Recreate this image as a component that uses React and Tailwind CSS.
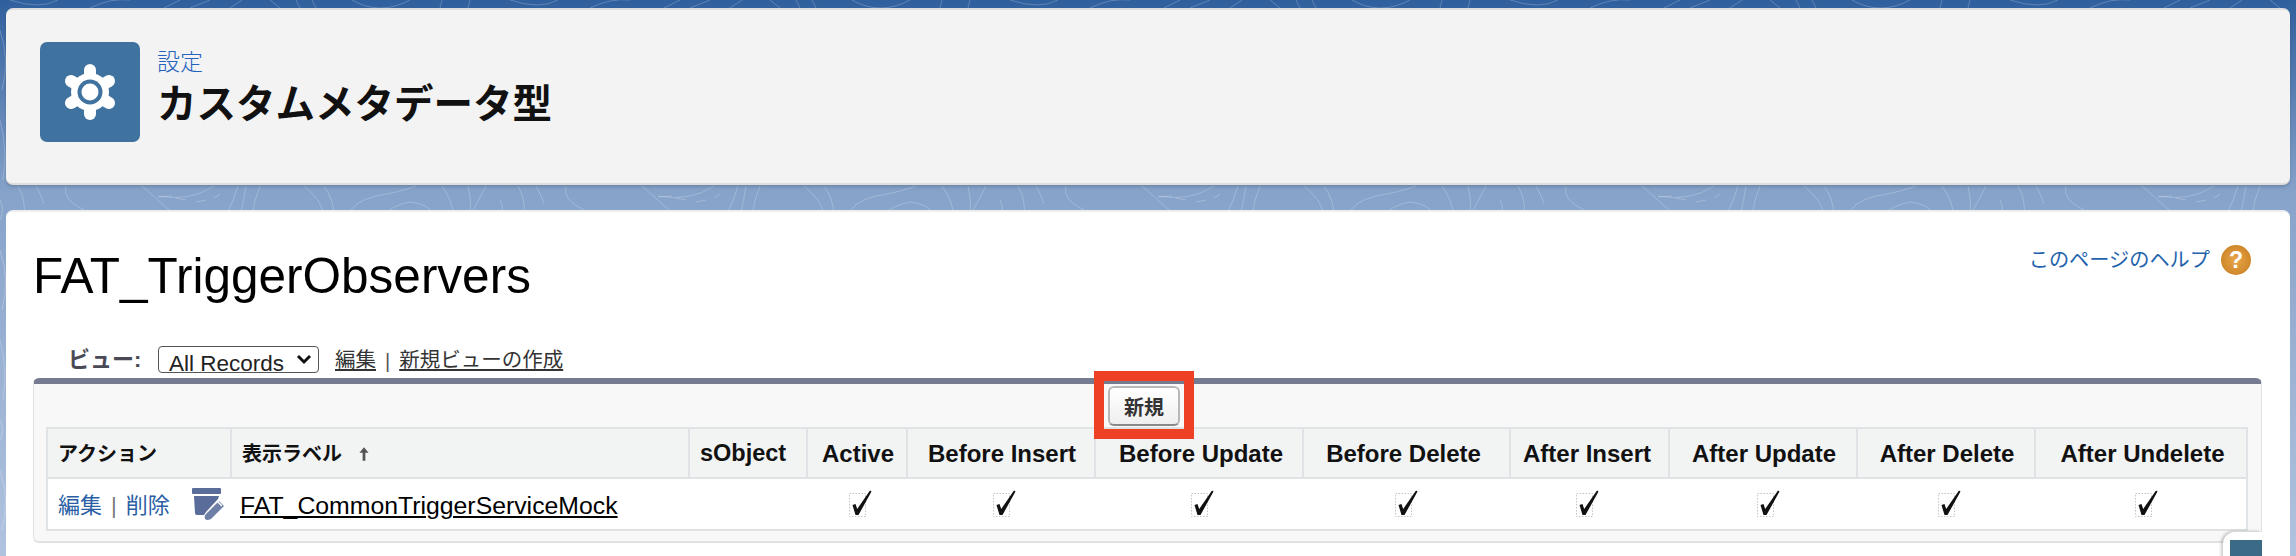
import React from 'react';

const columns = [184, 458, 118, 100, 188, 208, 207, 159, 188, 178, 212];

// the two middle columns sit a little left of centre in the source page
const flags = [
  { label: 'Active', check: 'ml-2', head: 'pl-[2px]' },
  { label: 'Before Insert', check: 'ml-2', head: 'pl-[2px]' },
  { label: 'Before Update', check: 'ml-2', head: 'pl-[4px]' },
  { label: 'Before Delete', check: 'ml-0', head: 'pr-[6px]' },
  { label: 'After Insert', check: '-ml-1', head: 'pr-[5px]' },
  { label: 'After Update', check: 'ml-3', head: 'pl-[2px]' },
  { label: 'After Delete', check: 'ml-2', head: 'pl-[2px]' },
  { label: 'After Undelete', check: 'ml-3', head: 'pl-[3px]' },
];

const Swirls = () => (
  <svg className="absolute inset-0 w-full h-full" aria-hidden="true">
    <defs>
      <pattern id="swirl" width="500" height="220" patternUnits="userSpaceOnUse">
        <g fill="none" stroke="#ffffff" strokeOpacity="0.22" strokeWidth="1">
          <path d="M18 186 Q26 200 24 216" />
          <path d="M36 186 Q42 196 44 204" />
          <path d="M66 186 Q62 200 84 210 L92 216" />
          <path d="M142 186 L176 216" />
          <path d="M158 196 Q190 202 214 186" />
          <path d="M158 197 L172 196 M176 198 L186 200 M196 202 L206 200 M214 198 L220 194" />
          <path d="M226 216 Q234 200 238 186 M240 216 Q244 200 246 186" />
          <path d="M252 216 Q254 200 260 186" />
          <path d="M304 186 Q322 200 324 216 M324 186 Q334 200 334 216" />
          <path d="M348 216 Q352 202 376 196 Q400 192 416 186" />
          <path d="M380 216 Q396 204 410 202 Q430 204 434 216" />
          <path d="M442 186 Q452 200 454 216 M468 186 Q472 200 470 216 L486 186" />
          <path d="M10 0 Q40 10 58 0 M90 8 Q110 -2 130 0 M180 0 L164 8 M210 0 L190 8 M230 8 L242 0" />
          <path d="M280 8 L270 0 M300 8 L296 0 M316 8 L312 0 M352 0 Q380 16 410 0 M440 8 L442 0 M468 8 L470 0" />
          <path d="M0 30 Q10 60 2 90 M0 120 Q8 150 3 180 M0 200 Q5 210 0 220" />
        </g>
      </pattern>
    </defs>
    <rect width="100%" height="100%" fill="url(#swirl)" />
  </svg>
);

const GearTile = () => (
  <div className="w-[100px] h-[100px] rounded-[7px] bg-[#3f729f] flex items-center justify-center shrink-0">
    <svg width="60" height="60" viewBox="0 0 60 60">
      <g stroke="#ffffff" strokeWidth="12" strokeLinecap="round">
        <line x1="30" y1="8" x2="30" y2="52" />
        <line x1="11" y1="19" x2="49" y2="41" />
        <line x1="49" y1="19" x2="11" y2="41" />
      </g>
      <circle cx="30" cy="30" r="19" fill="#ffffff" />
      <circle cx="30" cy="30" r="12.5" fill="#3f729f" />
      <circle cx="30" cy="30" r="8.5" fill="#ffffff" />
    </svg>
  </div>
);

const TaskIcon = () => (
  <svg width="32" height="32" viewBox="0 0 32 32" className="shrink-0">
    <rect x="0" y="0" width="29" height="6" rx="1" fill="#5a6d9a" />
    <path d="M2 8 H27 L26 11 L14 24 L12 27 H5 Q3 27 3 25 Z" fill="#5a6d9a" />
    <path d="M27 13 L32 18 L19 31 Q15 33 13 31 Q12 28 14 26 Z" fill="#6f80a8" />
    <path d="M25 13 L30 18" stroke="#ffffff" strokeWidth="1.5" />
  </svg>
);

const CheckMark = ({ className }) => (
  <svg width="24" height="28" viewBox="0 0 24 28" className={`inline-block align-middle ${className}`}>
    <rect x="0.5" y="3.5" width="16" height="23" fill="none" stroke="#c4c4c4" strokeWidth="1" strokeDasharray="1.5 1.5" />
    <polygon points="3.5,15 6.5,14 8.2,19 21,0.5 22.5,1.5 9.5,25 6.5,25" fill="#111111" />
  </svg>
);

export default function App() {
  return (
    <div className="relative h-[556px] overflow-hidden bg-linear-to-b from-[#2f5f9d] via-[#87a3ca] via-[35%] to-[#b0c3df] pt-2 px-[6px] font-['Liberation_Sans','Noto_Sans_CJK_JP',sans-serif]">
      <Swirls />

      {/* page header */}
      <div className="relative h-[177px] rounded-[7px] bg-[#f3f3f3] border-t-2 border-b-2 border-[#dedede] pt-[32px] pl-[34px] flex items-start gap-[17px] shadow-[0_2px_3px_rgba(0,0,0,0.15)]">
        <GearTile />
        <div>
          <div className="text-[23px] leading-[30px] mt-[5px] text-[#2463bd] font-light">設定</div>
          <h1 className="text-[39.5px] leading-[48px] mt-[3px] font-bold text-[#111111]">カスタムメタデータ型</h1>
        </div>
      </div>

      {/* main card */}
      <div className="relative mt-[25px] h-[400px] rounded-t-[7px] bg-white border-t-2 border-[#eeeeee] pl-[27px] pr-[28px] pt-[30px]">
        <div className="flex justify-between items-start">
          <h2 className="mt-[6px] text-[49.5px] leading-[56px] text-black">FAT_TriggerObservers</h2>
          <div className="flex items-center gap-[11px] mr-[11px] mt-[2px]">
            <a className="text-[20.2px] leading-[30px] pt-[1px] text-[#1f63ad]">このページのヘルプ</a>
            <span className="w-[30px] h-[30px] rounded-full bg-radial from-[#e9a648] to-[#c47a1c] text-white font-bold text-[23px] leading-[30px] text-center">?</span>
          </div>
        </div>

        {/* view selector */}
        <div className="mt-[42px] h-[27px] pl-[35px] flex items-center">
          <span className="w-[90px] text-[22px] font-bold text-[#4a4a56]">ビュー:</span>
          <div className="relative w-[161px] h-[27px] rounded-[4px] border border-[#555555]">
            <select className="appearance-none w-full h-full pl-[10px] pt-[5px] text-[22.5px] leading-[24px] text-[#222222] overflow-hidden">
              <option>All Records</option>
            </select>
            <svg width="16" height="11" viewBox="0 0 16 11" className="absolute right-[6px] top-[7px] pointer-events-none">
              <path d="M2 2 L8 8 L14 2" fill="none" stroke="#111111" strokeWidth="3" />
            </svg>
          </div>
          <a className="ml-[16px] pt-[2px] text-[20.5px] text-[#333333] underline">編集</a>
          <span className="mx-[9px] pt-[2px] text-[20px] text-[#555555]">|</span>
          <a className="pt-[2px] text-[20.5px] text-[#333333] underline">新規ビューの作成</a>
        </div>

        {/* list panel */}
        <div className="mt-[5px] h-[165px] rounded-[6px] border border-[#e0e3e5] border-b-2 border-t-[6px] border-t-[#757b91] bg-[#f8f8f8] pl-[12px] pr-[13px]">
          <div className="h-[43px] pt-[2px] flex justify-center">
            <div className="relative mr-[6px]">
              <button className="w-[72px] h-[40px] pt-[3px] rounded-[6px] border-2 border-[#b8b8b8] border-b-[#8a8a8a] bg-linear-to-b from-white to-[#efefef] text-[20px] font-bold text-[#333333]">新規</button>
              <div className="absolute -left-[14px] -right-[14px] -top-[15px] -bottom-[12px] border-[10px] border-[#ee4025] z-10 pointer-events-none" />
            </div>
          </div>
          <table className="table-fixed w-[2200px] border-collapse border-2 border-[#e0e3e5] bg-white">
            <colgroup>
              {columns.map((w, i) => (
                <col key={i} style={{ width: w }} />
              ))}
            </colgroup>
            <thead>
              <tr className="h-[50px] bg-[#f2f3f3] text-[#111111]">
                <th className="border-2 border-[#e0e3e5] pl-[10px] pt-[1px] text-left text-[20px] font-bold">アクション</th>
                <th className="border-2 border-[#e0e3e5] pl-[10px] pt-[1px] text-left text-[20px] font-bold">
                  <span className="inline-flex items-center gap-[14px]">
                    表示ラベル
                    <svg width="12" height="16" viewBox="0 0 10 14" className="ml-[2px]">
                      <path d="M5 1 L9 6 H6.2 V13 H3.8 V6 H1 Z" fill="#555555" />
                    </svg>
                  </span>
                </th>
                <th className="border-2 border-[#e0e3e5] pl-[10px] pt-[1px] text-left text-[23.5px] font-bold">sObject</th>
                {flags.map((f) => (
                  <th key={f.label} className={`border-2 border-[#e0e3e5] pt-[1px] text-center text-[24px] font-bold ${f.head}`}>{f.label}</th>
                ))}
              </tr>
            </thead>
            <tbody>
              <tr className="h-[52px]">
                <td className="pl-[10px] pt-[3px]">
                  <div className="flex items-center text-[22px] text-[#2a5fa5]">
                    <a>編集</a>
                    <span className="mx-[9px] text-[#777777]">|</span>
                    <a>削除</a>
                    <span className="ml-[22px] -mt-[3px]"><TaskIcon /></span>
                  </div>
                </td>
                <td className="pl-[9px] pt-[3px]">
                  <a className="text-[24.8px] text-black underline decoration-2 underline-offset-2">FAT_CommonTriggerServiceMock</a>
                </td>
                <td />
                {flags.map((f) => (
                  <td key={f.label} className="text-center"><CheckMark className={f.check} /></td>
                ))}
              </tr>
            </tbody>
          </table>
        </div>
      </div>

      {/* docked widget, cut off by the window */}
      <div className="absolute left-[2223px] top-[532px] w-[39px] h-[30px] rounded-tl-[12px] bg-white pl-[7px] pt-[8px] shadow-[-2px_-1px_3px_rgba(0,0,0,0.2)] z-20">
        <div className="w-[32px] h-[20px] bg-[#3a6a85]" />
      </div>
    </div>
  );
}
